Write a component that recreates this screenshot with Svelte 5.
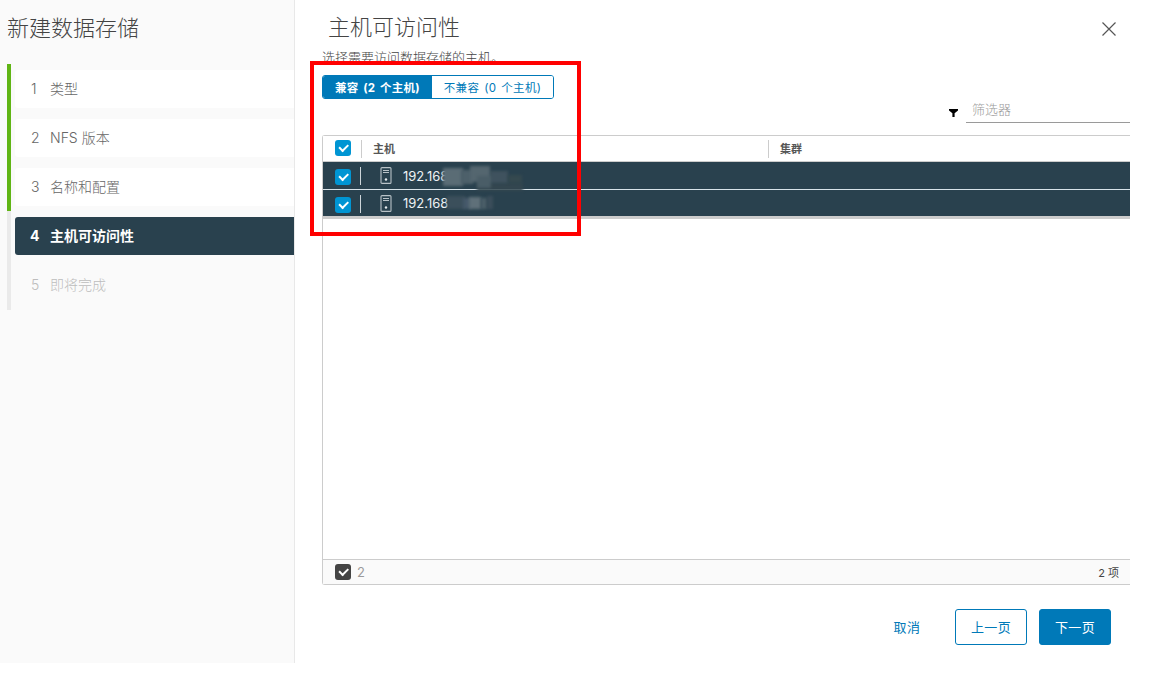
<script>
  const steps = [
    { n: 1, label: '类型', state: 'done' },
    { n: 2, label: 'NFS 版本', state: 'done' },
    { n: 3, label: '名称和配置', state: 'done' },
    { n: 4, label: '主机可访问性', state: 'active' },
    { n: 5, label: '即将完成', state: 'todo' }
  ];
  const rows = [
    { ip: '192.168', mosaic: [
      [36,14,46,8,'#33464f'],[49,2,18,12,'#3f525e'],[67,6,14,8,'#35494f'],[2,-1,20,18,'#5a6c75'],[20,1,12,14,'#4d606a'],[29,-3,20,16,'#54666f'],[36,7,14,12,'#4a5d67']
    ] },
    { ip: '192.168', mosaic: [
      [6,-1,18,13,'#3b4f5b'],[22,1,8,11,'#46596a'],[28,0,12,12,'#5f7079'],[40,1,6,11,'#4b5e68'],[46,-1,6,13,'#3b4e5a']
    ] }
  ];
</script>

<div class="page">
  <div class="shell">
    <aside class="side">
      <h2>新建数据存储</h2>
      <ol class="steps">
        {#each steps as s}
          <li class="step {s.state}">
            <span class="num">{s.n}</span><span>{s.label}</span>
          </li>
        {/each}
      </ol>
    </aside>

    <main class="main">
      <header class="head">
        <h1>主机可访问性</h1>
        <svg class="close" width="16" height="16" viewBox="0 0 16 16" aria-label="关闭"><path d="M1.5 1.5 14.5 14.5M14.5 1.5 1.5 14.5" stroke="#565656" stroke-width="1.2" fill="none"/></svg>
      </header>
      <p class="sub">选择需要访问数据存储的主机。</p>

      <div class="tabs">
        <button class="tab on">兼容 (2 个主机)</button>
        <button class="tab">不兼容 (0 个主机)</button>
      </div>

      <div class="filter">
        <svg width="9" height="8" viewBox="0 0 9 8"><path d="M0 0H9V1.4L5.6 4.2V8H3.4V4.2L0 1.4Z" fill="#000"/></svg>
        <div class="input">筛选器</div>
      </div>

      <section class="grid">
        <div class="thead">
          <div class="cbcell"><span class="cb"></span></div>
          <div class="th">主机</div>
          <div class="th">集群</div>
        </div>
        {#each rows as r}
          <div class="row">
            <div class="cbcell"><span class="cb"></span></div>
            <div class="host">
              <svg width="12" height="17" viewBox="0 0 12 17"><rect x="1" y="0.6" width="10" height="15.8" rx="1" fill="none" stroke="#b9c2c7" stroke-width="1.1"/><path d="M3 3.5H9M3 5.5H9" stroke="#b9c2c7"/><circle cx="6" cy="12.5" r="1.2" fill="#e8ecee"/></svg>
              <span class="ip">{r.ip}</span>
              <span class="mosaic">
                {#each r.mosaic as m}
                  <i style="left:{m[0]}px;top:{m[1]}px;width:{m[2]}px;height:{m[3]}px;background:{m[4]}"></i>
                {/each}
              </span>
            </div>
          </div>
        {/each}
        <div class="body"></div>
        <div class="foot">
          <span class="cb dark"></span>
          <span class="count">2</span>
          <span class="total">2 项</span>
        </div>
      </section>

      <footer class="actions">
        <button class="btn link">取消</button>
        <button class="btn outline">上一页</button>
        <button class="btn solid">下一页</button>
      </footer>

      <div class="redbox"></div>
    </main>
  </div>
</div>

<style>
  :global(body) {
    margin: 0;
    background: #fff;
  }
  .page {
    width: 1149px;
    height: 675px;
    overflow: hidden;
    font-family: Inter, "Noto Sans CJK SC", sans-serif;
    color: #565656;
  }
  .shell {
    display: flex;
    height: 663px;
  }
  .side {
    width: 294px;
    flex: none;
    background: #fafafa;
    border-right: 1px solid #e8e8e8;
  }
  .side h2 {
    margin: 0;
    padding: 13px 0 0 7px;
    height: 64px;
    box-sizing: border-box;
    font-size: 22px;
    line-height: 30px;
    font-weight: 300;
    color: #444;
  }
  .steps {
    list-style: none;
    margin: 0 0 0 7px;
    padding: 6px 0 6px 4px;
    height: 234px;
    border-left: 4px solid #eaeaea;
    display: flex;
    flex-direction: column;
    gap: 11px;
    border-image: linear-gradient(#60b515 0 147px, #eaeaea 147px) 1;
  }
  .step {
    height: 38px;
    box-sizing: border-box;
    flex: none;
    display: flex;
    align-items: center;
    padding: 0 0 2px 16px;
    font-size: 14px;
    font-weight: 300;
    color: #666;
    border-radius: 3px 0 0 3px;
    background: #fff;
  }
  .num {
    width: 19px;
    flex: none;
  }
  .step.active {
    background: #29414e;
    color: #fff;
    font-weight: 700;
    padding-left: 15px;
  }
  .step.active .num {
    width: 20px;
  }
  .step.todo {
    background: transparent;
    color: #bdbdbd;
  }
  .main {
    position: relative;
    width: 808px;
    margin-left: 27px;
    display: flex;
    flex-direction: column;
  }
  .head {
    height: 43px;
    display: flex;
    justify-content: space-between;
    padding: 12px 13px 0 6px;
    box-sizing: border-box;
  }
  .head h1 {
    margin: 0;
    font-size: 22px;
    line-height: 30px;
    font-weight: 300;
    color: #444;
  }
  .close {
    margin: 9px 0 0 0;
  }
  .sub {
    margin: 7px 0 0;
    font-size: 13px;
    line-height: 14px;
    height: 12px;
    font-weight: 300;
    color: #444;
  }
  .tabs {
    margin-top: 13px;
    width: 232px;
    height: 24px;
    box-sizing: border-box;
    display: flex;
    border: 1px solid #0079b8;
    border-radius: 3px;
    overflow: hidden;
    flex: none;
  }
  .tab {
    border: 0;
    padding: 0 0 1px;
    background: #fff;
    color: #0079b8;
    font: inherit;
    font-size: 11.5px;
    letter-spacing: 0.3px;
    word-spacing: 1.5px;
    flex: 1;
  }
  .tab.on {
    flex: none;
    width: 109px;
    background: #0079b8;
    color: #fff;
    font-weight: 700;
  }
  .filter {
    display: flex;
    justify-content: flex-end;
    align-items: center;
    gap: 8px;
    height: 24px;
    flex: none;
  }
  .filter svg {
    margin-top: 4px;
  }
  .input {
    width: 158px;
    padding-left: 6px;
    height: 23px;
    line-height: 20px;
    font-size: 13px;
    font-weight: 300;
    color: #9a9a9a;
    border-bottom: 1px solid #9a9a9a;
  }
  .grid {
    margin-top: 12px;
    height: 450px;
    flex: none;
    box-sizing: border-box;
    border: 1px solid #ccc;
    border-right: 0;
    border-radius: 3px 0 0 3px;
    display: flex;
    flex-direction: column;
  }
  .thead {
    height: 25px;
    display: grid;
    grid-template-columns: 38px 407px 1fr;
    flex: none;
    background: #fff;
    border-bottom: 1px solid #ccc;
  }
  .th {
    position: relative;
    padding-left: 12px;
    font-size: 11px;
    line-height: 27px;
    font-weight: 700;
    color: #565656;
  }
  .th::before {
    content: '';
    position: absolute;
    left: 0;
    top: 4px;
    height: 18px;
    width: 1px;
    background: #ccc;
  }
  .cbcell {
    padding: 4px 0 0 12px;
  }
  .cb {
    position: relative;
    display: block;
    width: 16px;
    height: 16px;
    border-radius: 3px;
    background: #0095d3;
  }
  .cb::after {
    content: '';
    position: absolute;
    left: 4px;
    top: 3.5px;
    width: 7px;
    height: 3.5px;
    border-left: 2px solid #fff;
    border-bottom: 2px solid #fff;
    transform: rotate(-45deg);
  }
  .cb.dark {
    background: #444;
  }
  .row {
    height: 27px;
    flex: none;
    display: grid;
    grid-template-columns: 38px 1fr;
    background: #29414e;
    border-bottom: 1px solid #d8e3e9;
  }
  .row:nth-of-type(3) {
    border-bottom: 3px solid #ccc;
    height: 26px;
  }
  .row .cbcell {
    padding-top: 7px;
    position: relative;
  }
  .row .cbcell::after {
    content: '';
    position: absolute;
    left: 37px;
    top: 5px;
    height: 18px;
    width: 1px;
    background: #cdd5d9;
  }
  .host {
    position: relative;
    display: flex;
    align-items: center;
    gap: 11px;
    padding-left: 19px;
    font-size: 13px;
    color: #eef2f4;
  }
  .mosaic {
    position: absolute;
    left: 80px;
    top: 7px;
    width: 120px;
    height: 14px;
  }
  .mosaic i {
    position: absolute;
    filter: blur(1.5px);
  }
  .body {
    flex: 1;
    background: #fff;
  }
  .foot {
    height: 25px;
    flex: none;
    box-sizing: border-box;
    border-top: 1px solid #ccc;
    background: #fafafa;
    display: flex;
    align-items: center;
    padding: 0 11px 0 12px;
  }
  .count {
    margin-left: 6px;
    font-size: 13px;
    color: #9a9a9a;
  }
  .total {
    margin-left: auto;
    font-size: 11px;
    color: #444;
  }
  .actions {
    margin-top: 24px;
    display: flex;
    justify-content: flex-end;
    align-items: center;
    gap: 12px;
    padding-right: 19px;
  }
  .btn {
    width: 72px;
    height: 36px;
    box-sizing: border-box;
    border-radius: 3px;
    font: inherit;
    font-size: 13px;
    letter-spacing: 0.4px;
    padding: 0 0 2px;
    border: 1px solid #0079b8;
    background: #fff;
    color: #0079b8;
  }
  .btn.link {
    border: 0;
    background: transparent;
  }
  .btn.solid {
    background: #0079b8;
    color: #fff;
  }
  .redbox {
    position: absolute;
    left: -12px;
    top: 61px;
    width: 271px;
    height: 175px;
    box-sizing: border-box;
    border: 4px solid #f00;
    pointer-events: none;
  }
</style>
